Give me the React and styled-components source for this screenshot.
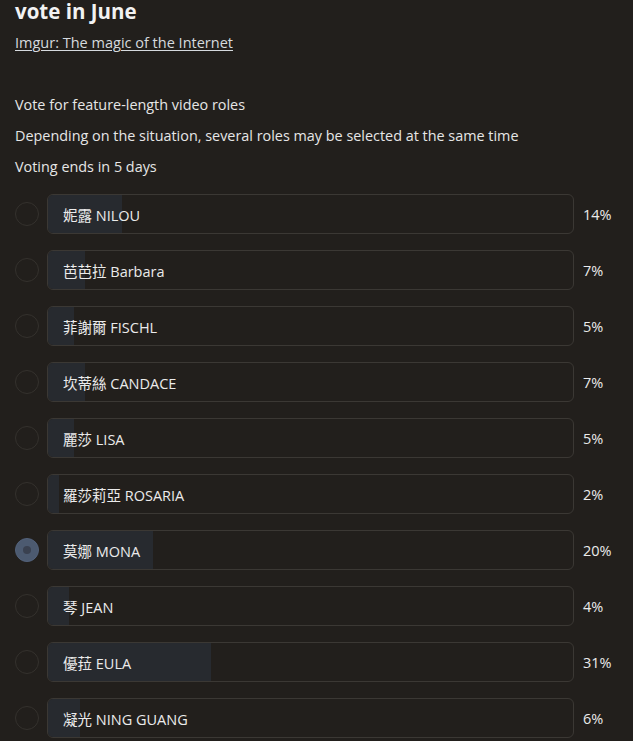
import React from "react";
import styled, { createGlobalStyle } from "styled-components";

const Global = createGlobalStyle`
  html, body { margin: 0; padding: 0; background: #221f1c; }
  body { font-family: "Open Sans", "Noto Sans CJK TC", sans-serif; color: #e8e6e3; }
`;

const Page = styled.div`
  padding: 1px 0 0 15px;
  width: 633px;
  box-sizing: border-box;
  overflow: hidden;
  height: 741px;
`;

const Title = styled.h1`
  margin: 0;
  font-size: 20.5px;
  line-height: 20px;
  font-weight: 700;
  color: #f2f2f2;
`;

const Link = styled.a`
  display: block;
  margin-top: 12px;
  font-size: 14.5px;
  line-height: 20px;
  color: #d6dade;
  text-decoration: underline;
  text-underline-offset: 2px;
`;

const Desc = styled.p`
  margin: 0;
  font-size: 14.4px;
  line-height: 31px;
  color: #e6e6e6;
`;

const Intro = styled.div`
  margin-top: 36px;
`;

const Options = styled.div`
  display: flex;
  flex-direction: column;
  gap: 16px;
  margin-top: 12px;
`;

const Row = styled.div`
  display: grid;
  grid-template-columns: 24px 527px 50px;
  column-gap: 8px;
  align-items: center;
  height: 40px;
`;

const Radio = styled.span`
  width: 24px;
  height: 24px;
  border-radius: 50%;
  box-sizing: border-box;
  border: 1.5px solid ${(p) => (p.$checked ? "#52617a" : "#34312d")};
  background: ${(p) => (p.$checked ? "#4c5a70" : "transparent")};
  display: flex;
  align-items: center;
  justify-content: center;
  &::after {
    content: "";
    display: ${(p) => (p.$checked ? "block" : "none")};
    width: 8px;
    height: 8px;
    border-radius: 50%;
    background: #3a4150;
  }
`;

const Box = styled.div`
  position: relative;
  height: 40px;
  box-sizing: border-box;
  border: 1px solid #3b3834;
  border-radius: 6px;
  overflow: hidden;
  display: flex;
  align-items: center;
  padding-left: 15px;
`;

const Fill = styled.div`
  position: absolute;
  left: 0;
  top: 0;
  bottom: 0;
  background: #272a2f;
`;

const Label = styled.span`
  position: relative;
  font-size: 14.5px;
  color: #ebebeb;
`;

const Pct = styled.span`
  font-size: 14.5px;
  color: #ebebeb;
  padding-left: 1px;
`;

const options = [
  ["妮露 NILOU", 14],
  ["芭芭拉 Barbara", 7],
  ["菲謝爾 FISCHL", 5],
  ["坎蒂絲 CANDACE", 7],
  ["麗莎 LISA", 5],
  ["羅莎莉亞 ROSARIA", 2],
  ["莫娜 MONA", 20, true],
  ["琴 JEAN", 4],
  ["優菈 EULA", 31],
  ["凝光 NING GUANG", 6],
];

export default function App() {
  return (
    <Page>
      <Global />
      <Title>vote in June</Title>
      <Link href="#">Imgur: The magic of the Internet</Link>
      <Intro>
        <Desc>Vote for feature-length video roles</Desc>
        <Desc>Depending on the situation, several roles may be selected at the same time</Desc>
        <Desc>Voting ends in 5 days</Desc>
      </Intro>
      <Options>
        {options.map(([name, pct, checked]) => (
          <Row key={name}>
            <Radio $checked={checked} />
            <Box>
              <Fill style={{ width: `${pct}%` }} />
              <Label>{name}</Label>
            </Box>
            <Pct>{pct}%</Pct>
          </Row>
        ))}
      </Options>
    </Page>
  );
}
